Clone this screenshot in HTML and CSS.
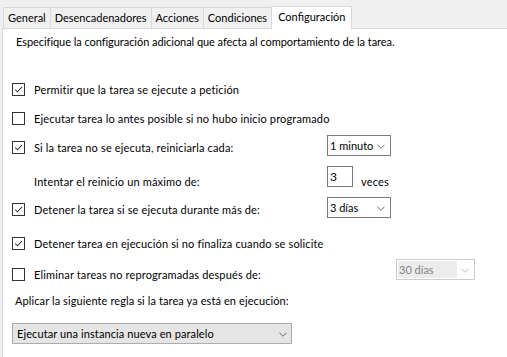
FILE: index.html
```html
<!DOCTYPE html>
<html lang="es">
<head>
    <meta charset="UTF-8">
    <title>Configuración</title>
    <link rel="stylesheet" href="styles.css">
</head>
<body>

<div class="tabs">
    <div class="tab">General</div>
    <div class="tab">Desencadenadores</div>
    <div class="tab">Acciones</div>
    <div class="tab">Condiciones</div>
    <div class="tab active">Configuración</div>
</div>

<div class="panel">
    <p class="intro">Especifique la configuración adicional que afecta al comportamiento de la tarea.</p>

    <div class="row row-1">
        <span class="check checked"><svg viewBox="0 0 13 13"><path d="M2.5 6.5 L5.2 9.2 L10.5 3.6" /></svg></span>
        <span class="label">Permitir que la tarea se ejecute a petición</span>
    </div>

    <div class="row row-2">
        <span class="check"></span>
        <span class="label">Ejecutar tarea lo antes posible si no hubo inicio programado</span>
    </div>

    <div class="row row-3">
        <span class="check checked"><svg viewBox="0 0 13 13"><path d="M2.5 6.5 L5.2 9.2 L10.5 3.6" /></svg></span>
        <span class="label wide">Si la tarea no se ejecuta, reiniciarla cada:</span>
        <div class="combo">1 minuto<svg class="chev" viewBox="0 0 9 5"><path d="M0.5 0.5 L4.5 4.5 L8.5 0.5" /></svg></div>
    </div>

    <div class="row row-4">
        <span class="label indent">Intentar el reinicio un máximo de:</span>
        <div class="spin">3</div>
        <span class="label unit">veces</span>
    </div>

    <div class="row row-5">
        <span class="check checked"><svg viewBox="0 0 13 13"><path d="M2.5 6.5 L5.2 9.2 L10.5 3.6" /></svg></span>
        <span class="label wide">Detener la tarea si se ejecuta durante más de:</span>
        <div class="combo">3 días<svg class="chev" viewBox="0 0 9 5"><path d="M0.5 0.5 L4.5 4.5 L8.5 0.5" /></svg></div>
    </div>

    <div class="row row-6">
        <span class="check checked"><svg viewBox="0 0 13 13"><path d="M2.5 6.5 L5.2 9.2 L10.5 3.6" /></svg></span>
        <span class="label">Detener tarea en ejecución si no finaliza cuando se solicite</span>
    </div>

    <div class="row row-7">
        <span class="check"></span>
        <span class="label wide">Eliminar tareas no reprogramadas después de:</span>
        <div class="combo disabled"><span class="combo-text">30 días</span><svg class="chev" viewBox="0 0 9 5"><path d="M0.5 0.5 L4.5 4.5 L8.5 0.5" /></svg></div>
    </div>

    <p class="rule-label">Aplicar la siguiente regla si la tarea ya está en ejecución:</p>

    <div class="combo rule">Ejecutar una instancia nueva en paralelo<svg class="chev" viewBox="0 0 9 5"><path d="M0.5 0.5 L4.5 4.5 L8.5 0.5" /></svg></div>
</div>

</body>
</html>
```

FILE: styles.css
```css
html {
    overflow: hidden;
}

body {
    margin: 0;
    background: #f0f0f0;
    font-family: 'Lato', 'Open Sans', sans-serif;
    font-size: 11px;
    color: #000;
    height: 357px;
    overflow: hidden;
}

.tabs {
    display: flex;
    align-items: flex-end;
    height: 28px;
    padding-left: 3px;
}

.tab {
    height: 20px;
    line-height: 20px;
    padding: 0 4px;
    border: 1px solid #d9d9d9;
    border-bottom: none;
    margin-right: -1px;
    background: #f0f0f0;
    white-space: nowrap;
}

.tab.active {
    background: #fff;
    height: 22px;
    line-height: 20px;
    margin-bottom: -1px;
    padding: 0 6px;
    position: relative;
}

.panel {
    background: #fff;
    margin-left: 2px;
    border-top: 1px solid #d9d9d9;
    border-left: 1px solid #d9d9d9;
    height: 328px;
    padding-left: 9px;
}

.intro {
    margin: 0;
    padding-top: 5px;
    padding-left: 4px;
    line-height: 16px;
    letter-spacing: -0.05px;
}

.row {
    display: flex;
    align-items: center;
    height: 21px;
}

.row-1 { margin-top: 27px; }
.row-2 { margin-top: 8px; }
.row-3 { margin-top: 8px; }
.row-4 { margin-top: 10px; align-items: flex-start; }
.row-5 { margin-top: 10px; }
.row-6 { margin-top: 13px; }
.row-7 { margin-top: 10px; }

.check {
    width: 11px;
    height: 11px;
    border: 1px solid #333;
    background: #fff;
    flex: none;
    margin-right: 9px;
    margin-top: 4px;
}

.check svg {
    display: block;
    width: 11px;
    height: 11px;
}

.check svg path {
    fill: none;
    stroke: #333;
    stroke-width: 1.2;
}

.label {
    white-space: nowrap;
    margin-top: 4px;
    letter-spacing: 0.15px;
}

.label.wide {
    width: 293px;
}

.label.indent {
    margin-left: 22px;
    width: 293px;
    margin-top: 9px;
}

.label.unit {
    margin-left: 8px;
    margin-top: 9px;
}

.combo {
    position: relative;
    box-sizing: border-box;
    width: 64px;
    height: 21px;
    line-height: 19px;
    border: 1px solid #7a7a7a;
    background: #fff;
    padding-left: 2px;
    white-space: nowrap;
    font-size: 11px;
}

.chev {
    position: absolute;
    right: 5px;
    top: 8px;
    width: 8px;
    height: 5px;
}

.chev path {
    fill: none;
    stroke: #5a5a5a;
    stroke-width: 1;
}

.combo.disabled {
    width: 79px;
    margin-left: 69px;
    margin-top: -6px;
    border-color: #cccccc;
    color: #838383;
    padding: 1px;
}

.combo.disabled .combo-text {
    display: block;
    width: 58px;
    height: 17px;
    line-height: 17px;
    background: #ececec;
    padding-left: 1px;
}

.combo.disabled .chev path {
    stroke: #b0b0b0;
}

.spin {
    box-sizing: border-box;
    width: 26px;
    height: 21px;
    line-height: 19px;
    border: 1px solid #7a7a7a;
    padding-left: 2px;
    font-size: 12px;
}

.rule-label {
    margin: 10px 0 0 3px;
    line-height: 15px;
    letter-spacing: 0.1px;
}

.combo.rule {
    width: 280px;
    margin-top: 15px;
    background: #e5e5e5;
    border-color: #adadad;
    padding-left: 4px;
    font-size: 11px;
    letter-spacing: 0.1px;
}

.combo.rule .chev {
    right: 4px;
}
```
